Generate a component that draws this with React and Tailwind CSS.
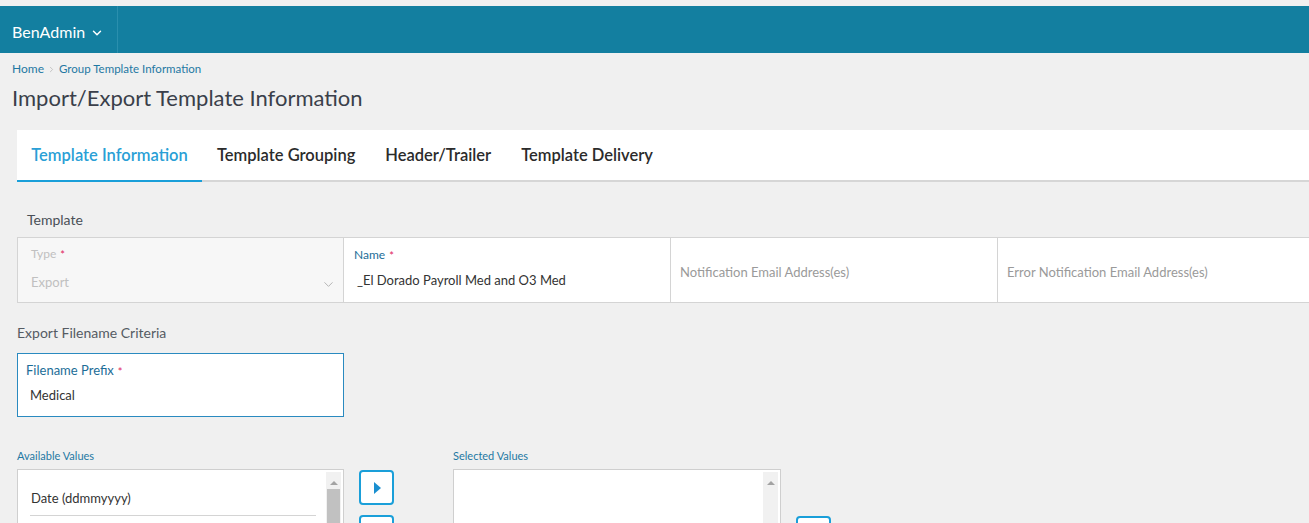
import { ChevronDown, ChevronRight } from 'lucide-react'

const font = { fontFamily: 'Lato, "Open Sans", sans-serif' }

function Req() {
  return <span className="ml-1 text-[11px] text-[#e0245e] align-middle">*</span>
}

function Scrollbar({ thumb }) {
  return (
    <div className="w-[15px] shrink-0 bg-[#f1f1f1] flex flex-col items-center pt-[9px]">
      <div className="w-0 h-0 border-l-[4px] border-r-[4px] border-b-[4px] border-l-transparent border-r-transparent border-b-[#a3a3a3]" />
      {thumb && <div className="mt-[4px] w-[13px] flex-1 bg-[#c1c1c1]" />}
    </div>
  )
}

function MoveButton({ className = '' }) {
  return (
    <button className={`w-[35px] h-[35px] rounded-[4px] border-2 border-[#1a9fd9] bg-white flex items-center justify-center ${className}`}>
      <span className="w-0 h-0 border-t-[6px] border-b-[6px] border-l-[7px] border-t-transparent border-b-transparent border-l-[#1a8fd0] ml-[2px]" />
    </button>
  )
}

export default function App() {
  return (
    <div className="w-[1309px] h-[523px] overflow-hidden bg-[#f0f0f0] pt-[6px]" style={font}>
      <header className="h-[47px] bg-[#137fa0] flex">
        <div className="h-full w-[118px] border-r border-[#2a8fae] flex items-center pl-[12px] pt-[4px] gap-[5px] text-white text-[16px]">
          BenAdmin <ChevronDown size={14} strokeWidth={2.5} className="mt-[2px]" />
        </div>
      </header>

      <div className="px-[12px]">
        <nav className="mt-[9px] flex items-center text-[12px] text-[#1f78a3] h-[14px]">
          <span>Home</span>
          <ChevronRight size={9} className="mx-[3px] text-[#b5b5b5]" />
          <span className="text-[11.5px]">Group Template Information</span>
        </nav>
        <h1 className="mt-[9px] text-[22px] leading-[26px] text-[#3a3f4a]">Import/Export Template Information</h1>
      </div>

      <div className="ml-[17px] mt-[19px] bg-white h-[52px] border-b-2 border-[#d6d6d6] flex items-stretch text-[16.5px] font-semibold">
        <div className="w-[185px] flex items-center justify-center text-[#2a9fd6] border-b-2 border-[#1a9fd9] -mb-[2px]">Template Information</div>
        <div className="px-[15px] flex items-center text-[#2b2b2b]">Template Grouping</div>
        <div className="px-[15px] flex items-center text-[#2b2b2b]">Header/Trailer</div>
        <div className="px-[15px] flex items-center text-[#2b2b2b]">Template Delivery</div>
      </div>

      <div className="pl-[17px]">
        <div className="pl-[10px] mt-[29px] text-[14px] text-[#4a4f57] h-[18px] leading-[18px]">Template</div>
        <div className="mt-[8px] flex h-[66px] border-y border-[#d4d4d4]">
          <div className="w-[327px] border-l border-r border-[#d4d4d4] bg-[#f7f7f7] pl-[13px] pr-[8px] pt-[8px] relative">
            <div className="text-[12px] text-[#c0c0c0] leading-[16px]">Type<Req /></div>
            <div className="mt-[10px] text-[13px] text-[#c0c0c0]">Export</div>
            <ChevronDown size={15} strokeWidth={1.5} className="absolute right-[7px] top-[39px] text-[#b0b0b0]" />
          </div>
          <div className="w-[327px] border-r border-[#d4d4d4] bg-white pl-[10px] pt-[9px]">
            <div className="text-[12px] text-[#1c6d97] leading-[16px]">Name<Req /></div>
            <div className="mt-[7px] pl-[3px] text-[13px] text-[#333]">_El Dorado Payroll Med and O3 Med</div>
          </div>
          <div className="w-[327px] border-r border-[#d4d4d4] bg-white pl-[9px] flex items-center pt-[6px] text-[13px] text-[#9a9a9a]">Notification Email Address(es)</div>
          <div className="flex-1 bg-white pl-[9px] flex items-center pt-[6px] text-[13px] text-[#9a9a9a]">Error Notification Email Address(es)</div>
        </div>

        <div className="mt-[21px] text-[14px] text-[#555b63] h-[18px] leading-[18px]">Export Filename Criteria</div>
        <div className="mt-[11px] w-[327px] h-[64px] border border-[#2a8ac0] bg-white pl-[8px] pt-[8px]">
          <div className="text-[13px] text-[#1c6d97] leading-[16px]">Filename Prefix<Req /></div>
          <div className="mt-[6px] pl-[4px] text-[13px] text-[#333]">Medical</div>
        </div>

        <div className="mt-[32px] flex">
          <div className="w-[327px]">
            <div className="text-[11px] text-[#1f78a3] h-[14px] leading-[14px]">Available Values</div>
            <div className="mt-[6px] h-[80px] border border-[#cfcfcf] bg-white p-[2px] flex">
              <div className="flex-1 pl-[10px] pr-[10px]">
                <div className="h-[44px] border-b border-[#d4d4d4] flex items-center pl-[1px] pt-[10px] text-[13px] text-[#333]">Date (ddmmyyyy)</div>
              </div>
              <Scrollbar thumb />
            </div>
          </div>
          <div className="ml-[15px] pt-[21px] flex flex-col gap-[10px]">
            <MoveButton />
            <MoveButton />
          </div>
          <div className="ml-[59px] w-[328px]">
            <div className="text-[11px] text-[#1f78a3] h-[14px] leading-[14px]">Selected Values</div>
            <div className="mt-[6px] h-[80px] border border-[#cfcfcf] bg-white p-[2px] flex">
              <div className="flex-1" />
              <Scrollbar />
            </div>
          </div>
          <div className="ml-[15px] pt-[67px]">
            <MoveButton />
          </div>
        </div>
      </div>
    </div>
  )
}
